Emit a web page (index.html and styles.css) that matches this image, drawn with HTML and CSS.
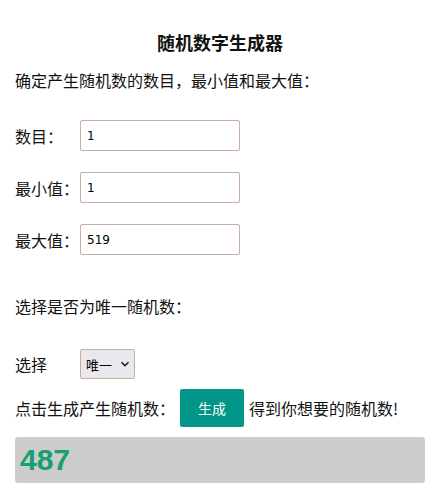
FILE: index.html
```html
<!DOCTYPE html>
<html lang="zh">
<head>
<meta charset="utf-8">
<title>随机数字生成器</title>
<link rel="stylesheet" href="styles.css">
</head>
<body>
<div class="page">
  <h1 class="title">随机数字生成器</h1>
  <p class="intro">确定产生随机数的数目，最小值和最大值：</p>
  <div class="row"><span class="label">数目：</span><input class="field" type="text" value="1"></div>
  <div class="row"><span class="label">最小值：</span><input class="field" type="text" value="1"></div>
  <div class="row"><span class="label">最大值：</span><input class="field" type="text" value="519"></div>
  <p class="question">选择是否为唯一随机数：</p>
  <div class="row select-row"><span class="label">选择</span>
    <div class="select">唯一<svg class="chev" width="10" height="6" viewBox="0 0 10 6"><path d="M1.5 1.2 L5 4.6 L8.5 1.2" fill="none" stroke="#222" stroke-width="1.6"/></svg></div>
  </div>
  <div class="gen-row"><span>点击生成产生随机数：</span><button class="btn">生成</button><span>得到你想要的随机数!</span></div>
  <div class="result">487</div>
</div>
</body>
</html>
```
FILE: styles.css
```css
html, body { margin: 0; padding: 0; background: #fff; }
body { font-family: "Noto Sans CJK SC", "Noto Sans", sans-serif; color: #111; font-size: 16px; }
.page { padding: 0 9px 0 15px; }
.title { margin: 0; padding-top: 29px; font-size: 18px; line-height: 26px; font-weight: 700; text-align: center; }
.intro { margin: 12px 0 0; line-height: 26px; }
.row { display: flex; align-items: center; height: 31px; }
.intro + .row { margin-top: 27px; }
.row + .row { margin-top: 21px; }
.label { width: 65px; line-height: 26px; }
.field { box-sizing: border-box; width: 160px; height: 31px; border: 1px solid #c8ada0; border-radius: 2px; padding: 0 6px; font-family: "DejaVu Sans", sans-serif; font-size: 12px; color: #000; background: #fff; margin: 0; outline: none; }
.question { margin: 38px 0 0; line-height: 26px; }
.select-row { margin-top: 30px; height: 30px; }
.select { box-sizing: border-box; width: 55px; height: 30px; border: 1px solid #c8ada0; border-radius: 2px; background: #e9e9ed; display: flex; align-items: center; padding-left: 5px; font-size: 13px; color: #000; gap: 8px; }
.chev { display: block; }
.gen-row { display: flex; align-items: center; margin-top: 10px; height: 38px; line-height: 26px; }
.btn { box-sizing: border-box; width: 64px; height: 38px; margin: 0 5px 0 5px; border: 0; border-radius: 2px; background: #009688; color: #fff; font-family: "Noto Sans CJK SC", sans-serif; font-size: 14px; padding: 0; }
.result { box-sizing: border-box; margin-top: 10px; width: 410px; height: 46px; background: #cccccc; border-radius: 3px; padding-left: 5px; font-family: "Liberation Sans", Arial, sans-serif; font-weight: 700; font-size: 30px; line-height: 46px; color: #16a06f; }
```
